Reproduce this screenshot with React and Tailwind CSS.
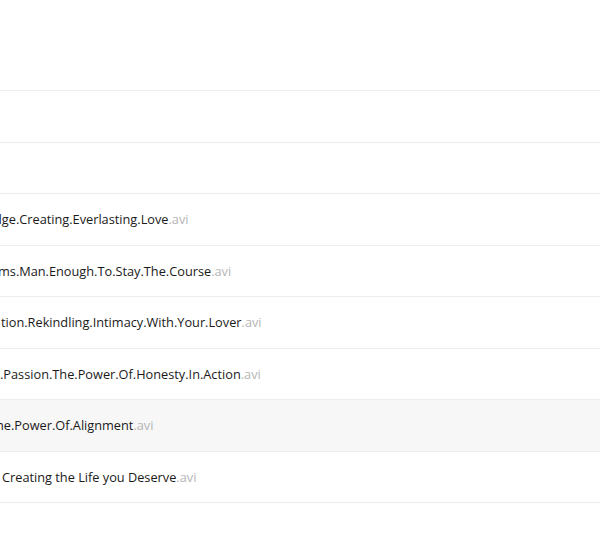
const ROWS = [
  { name: '', ext: '', off: '' },
  { name: '', ext: '', off: '' },
  { name: 'dge.Creating.Everlasting.Love', ext: '.avi', off: 'ml-[-6px]' },
  { name: 'ms.Man.Enough.To.Stay.The.Course', ext: '.avi', off: 'ml-[-2px]' },
  { name: 'tion.Rekindling.Intimacy.With.Your.Lover', ext: '.avi', off: 'ml-[1px]' },
  { name: '.Passion.The.Power.Of.Honesty.In.Action', ext: '.avi', off: 'ml-[0px]' },
  { name: 'he.Power.Of.Alignment', ext: '.avi', off: 'ml-[-4px]', hover: true },
  { name: 'Creating the Life you Deserve', ext: '.avi', off: 'ml-[2px]' },
];

export default function App() {
  return (
    <div
      className="h-[553px] w-[600px] overflow-hidden bg-white text-[12.75px] text-[#1a1a1a]"
      style={{ fontFamily: '"Open Sans", "Noto Sans", sans-serif' }}
    >
      <div className="h-[90px]" />
      <div className="border-b border-[#ececec]">
        {ROWS.map((r, i) => (
          <div
            key={i}
            className={`flex h-[51.5px] items-center overflow-hidden border-t border-[#ececec] pt-[1px] ${r.hover ? 'bg-[#f7f7f7]' : ''}`}
          >
            <span className={`whitespace-nowrap ${r.off}`}>
              {r.name}
              <span className="text-[#b5b5b5]">{r.ext}</span>
            </span>
          </div>
        ))}
      </div>
    </div>
  );
}
